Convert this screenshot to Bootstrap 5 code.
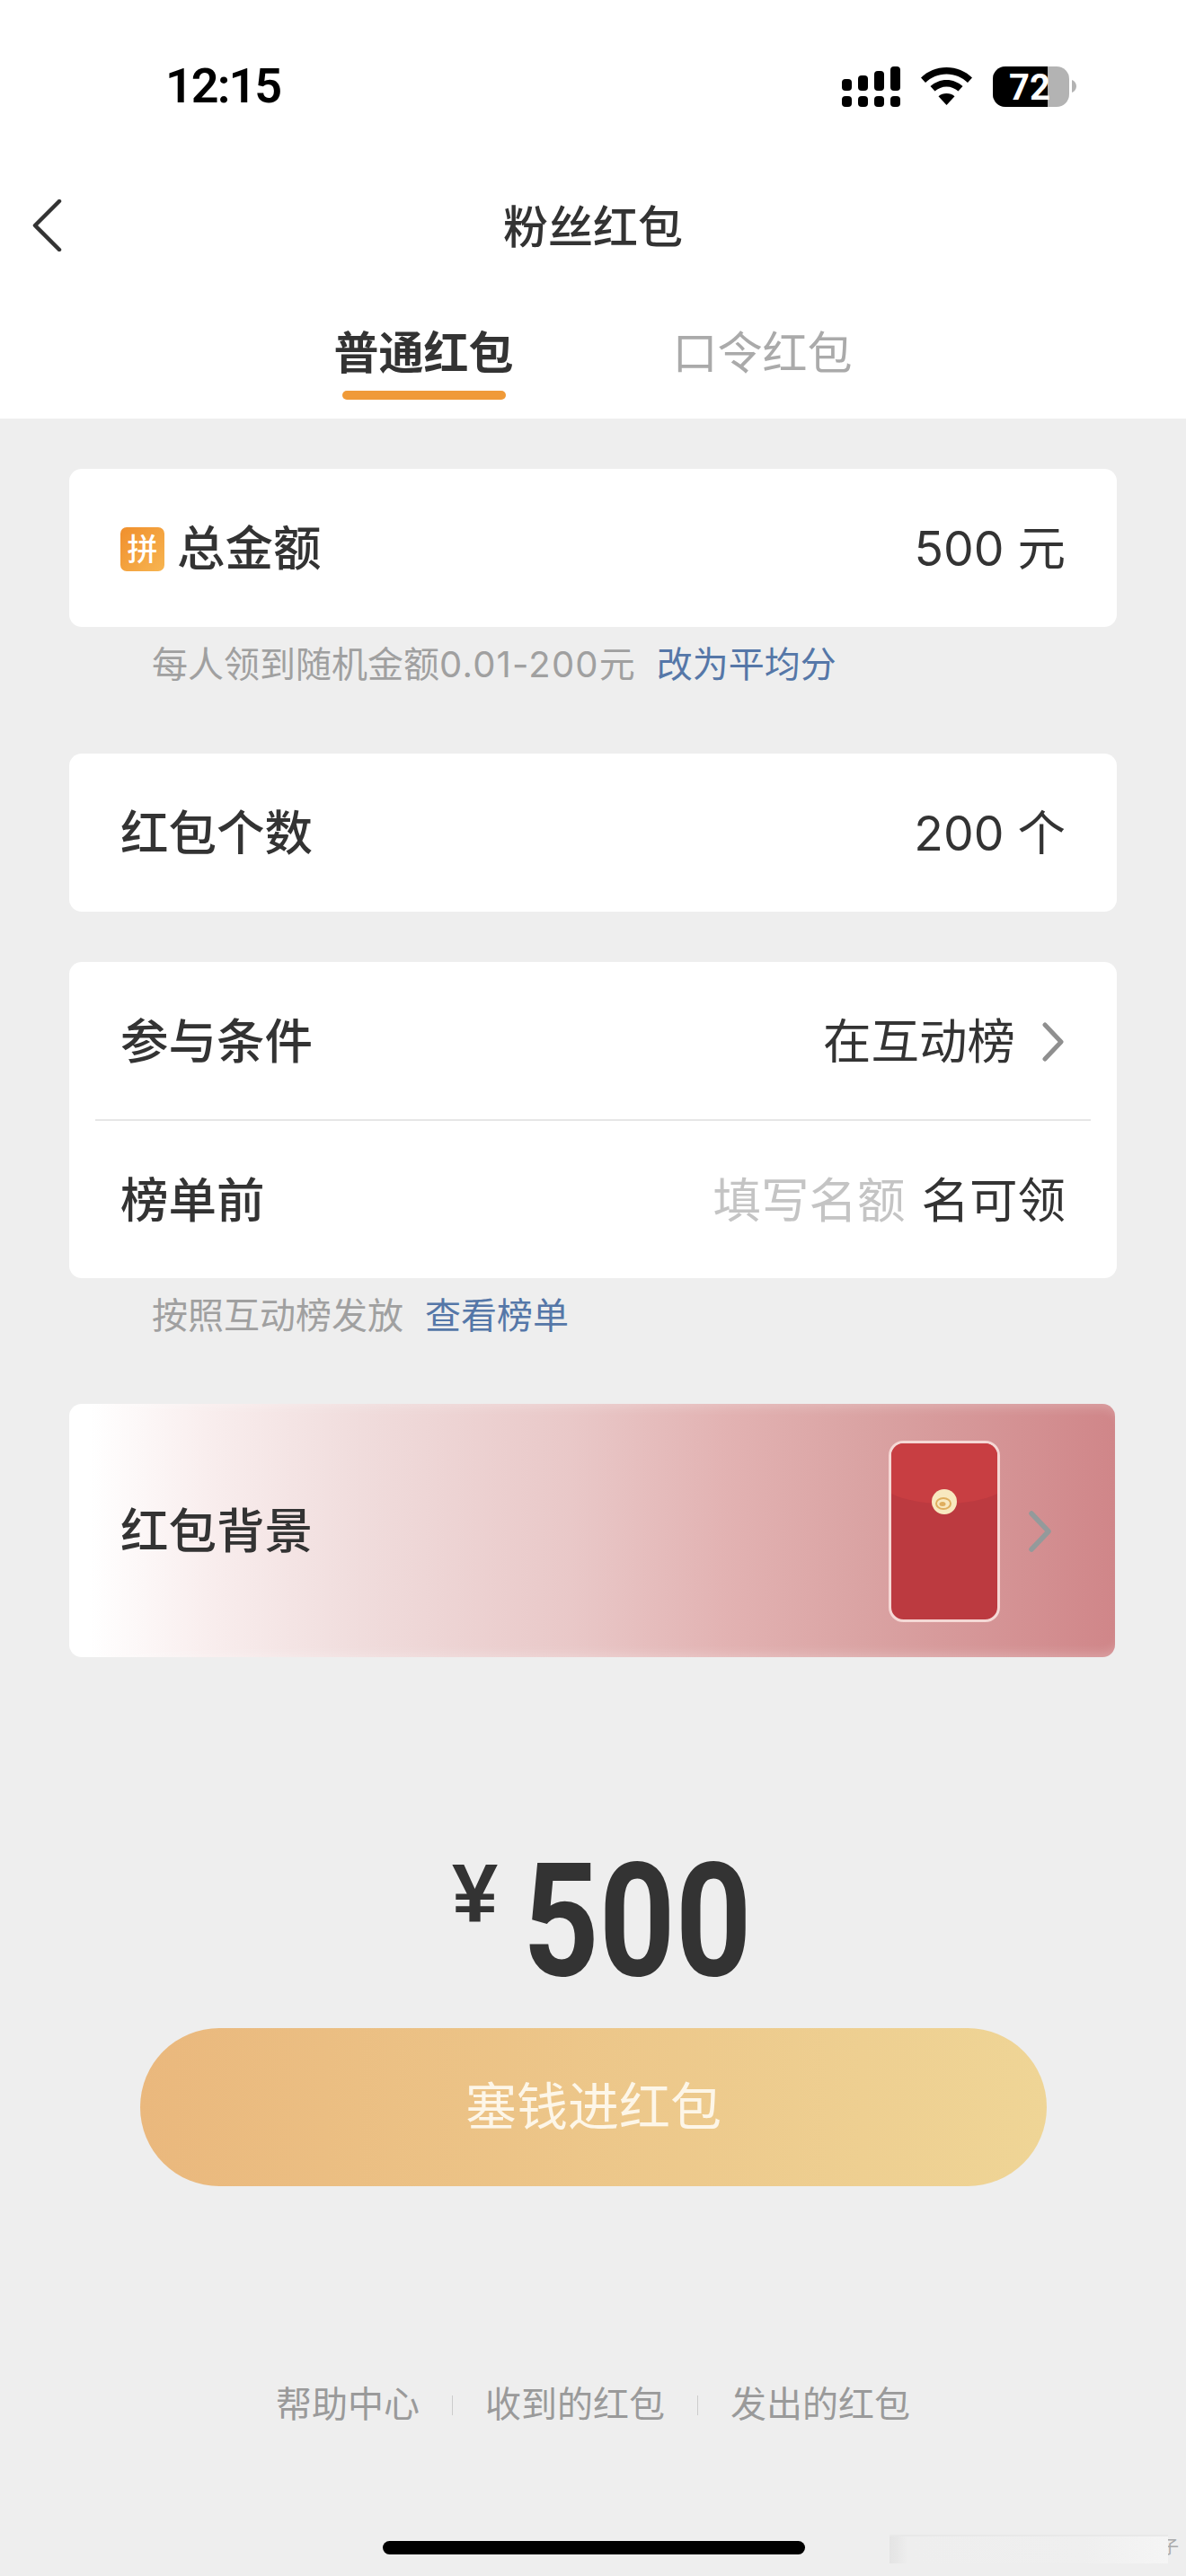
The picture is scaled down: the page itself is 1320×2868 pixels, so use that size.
<!DOCTYPE html>
<html lang="zh-CN">
<head>
  <meta charset="UTF-8" />
  <meta name="viewport" content="width=device-width, initial-scale=1.0" />
  <title>粉丝红包</title>
  <link href="https://cdn.jsdelivr.net/npm/bootstrap@5.3.3/dist/css/bootstrap.min.css" rel="stylesheet" />
  <style>
    body { background: #eee; color: #333; font-family: Inter, "Noto Sans CJK SC", sans-serif; }
    .page { width: 1320px; height: 2868px; overflow: hidden; }
    .top-area { height: 466px; background: #fff; }
    .status-row { height: 196px; padding: 0 122px 4px 184px; }
    .clock { font: 600 54px/1 Roboto, sans-serif; color: #000; letter-spacing: -2px; }
    .title-row { height: 112px; padding-top: 2px; }
    .back-btn { position: absolute; left: 34px; top: 26px; }
    .page-title { font-size: 50px; font-weight: 500; line-height: 1; }
    .tab-row { gap: 177px; padding-top: 60px; }
    .tab-item { font-size: 50px; line-height: 1; width: 200px; text-align: center; white-space: nowrap; }
    .tab-on { font-weight: 700; }
    .tab-off { color: #aaa; }
    .tab-bar { width: 182px; height: 10px; margin: 17px auto 0; background: #f09a38; border-radius: 5px; }
    .main-area { padding: 56px 77px 0; position: relative; }
    .panel { border: 0; border-radius: 14px; background: #fff; }
    .field-row { height: 176px; padding: 2px 57px 0 57px; font-size: 53.5px; line-height: 1; color: #333; }
    .field-label { font-weight: 500; }
    .pin-icon { width: 49px; height: 49px; border-radius: 7px; background: linear-gradient(135deg, #f08f2c, #f7b551); color: #fff; font-size: 34px; font-weight: 500; line-height: 49px; text-align: center; margin-right: 14px; }
    .hint-line { font-size: 40px; line-height: 1; color: #a0a0a0; padding: 22px 0 0 92px; height: 141px; }
    .hint-nums { letter-spacing: 1.2px; }
    .hint-link { color: #5577a8; margin-left: 24px; }
    .spaced { margin-top: 56px; }
    .split-line { height: 2px; background: #e6e6e6; margin: 0 29px; }
    .row-half { height: 175px; }
    .link-value { gap: 29px; }
    .ph-text { color: #c4c4c4; margin-right: 18px; }
    .bg-panel { height: 282px; margin: -1px 2px 0 0; padding: 2px 71px 0 57px; background: linear-gradient(90deg, #fff 0, #fff 2%, #f9eeee 13%, #f0dcdc 28%, #e9c8c8 48%, #e2b2b2 63%, #daa3a3 76%, #d08689 100%); box-shadow: inset 0 12px 12px -8px rgba(255,255,255,.22), inset 0 -12px 12px -8px rgba(255,255,255,.22); font-size: 53.5px; font-weight: 500; line-height: 1; }
    .pack-group { gap: 32px; }
    .sum-line { margin-top: 175px; height: 238px; padding-left: 426px; color: #333; }
    .sum-yen { font: 700 92px/1 "Liberation Sans", sans-serif; margin-top: -62px; width: 79px; }
    .sum-num { font: 700 176px/1 Roboto, sans-serif; transform: scaleX(.84); transform-origin: left center; width: 242px; }
    .pay-btn { display: block; width: 1009px; height: 176px; margin: 0 0 0 79px; border: 0; border-radius: 88px; background: linear-gradient(90deg, #eab87d, #efd596); color: #fdf6e8; font-size: 57px; font-weight: 400; }
    .foot-line { margin-top: 223px; font-size: 40px; line-height: 1; color: #9a9a9a; }
    .foot-sep { width: 1px; height: 22px; background: #ccc; margin: 10px 36px 0; }
    .home-bar { width: 470px; height: 15px; background: #000; border-radius: 8px; margin: 132px 0 0 349px; }
    .wm-char { position: absolute; left: 1292px; top: 2824px; font-size: 20px; line-height: 24px; color: #aaa; }
    .wm-patch { position: absolute; left: 990px; top: 2822px; width: 310px; height: 32px; background: linear-gradient(90deg, #e4e4e4 0, #e8e8e8 10px, #eeeeee 20px, #efefef 70%, #f5f5f5 100%); border-top: 2px solid #e8e8e8; }
  </style>
</head>
<body>
  <div class="page d-flex flex-column position-relative">
    <header class="top-area">
      <div class="status-row d-flex justify-content-between align-items-center">
        <div class="clock">12:15</div>
        <svg width="261" height="60" viewBox="937 66 261 60" aria-hidden="true">
          <g fill="#000">
            <rect x="937" y="88" width="11" height="13" rx="4"/><rect x="955" y="84" width="11" height="17" rx="4"/>
            <rect x="973" y="79" width="11" height="22" rx="4"/><rect x="991" y="74" width="11" height="27" rx="4"/>
            <rect x="937" y="107" width="11" height="12" rx="4"/><rect x="955" y="107" width="11" height="12" rx="4"/>
            <rect x="973" y="107" width="11" height="12" rx="4"/><rect x="991" y="107" width="11" height="12" rx="4"/>
            <path d="M1053.5 75c11 0 21 4.200 28.500 11.500l-5 5.500c-6-5.800-14.500-9.500-23.500-9.500s-17.500 3.700-23.500 9.500l-5-5.500c7.500-7.300 17.500-11.500 28.500-11.500z"/>
            <path d="M1053.500 89c7 0 13 2.700 18 7l-5 5.500c-3.500-3-8-5-13-5s-9.500 2-13 5l-5-5.500c5-4.300 11-7 18-7z"/>
            <path d="M1053.500 104c3.500 0 6.500 1.200 9 3.200l-9 9.800-9-9.800c2.500-2 5.500-3.200 9-3.200z"/>
          </g>
          <rect x="1105" y="74" width="85" height="45" rx="14" fill="#b3b3b3"/>
          <path d="M1119 74h47v45h-47a14 14 0 0 1-14-14v-17a14 14 0 0 1 14-14z" fill="#000"/>
          <path d="M1193 89c3 1 5 4 5 7s-2 6-5 7z" fill="#b3b3b3"/>
          <text x="1123" y="111" fill="#fff" font-family="Roboto, sans-serif" font-size="40" font-weight="700">72</text>
        </svg>
      </div>
      <div class="title-row position-relative d-flex justify-content-center align-items-center">
        <a href="#" class="back-btn" aria-label="back">
          <svg width="36" height="58" viewBox="0 0 36 58"><path d="M32 2 5 29l27 27" fill="none" stroke="#333" stroke-width="4.500" stroke-linecap="round" stroke-linejoin="round"/></svg>
        </a>
        <div class="page-title">粉丝红包</div>
      </div>
      <div class="tab-row d-flex justify-content-center">
        <div class="tab-item tab-on">普通红包<div class="tab-bar"></div></div>
        <div class="tab-item tab-off">口令红包</div>
      </div>
    </header>

    <main class="main-area">
      <div class="card panel">
        <div class="field-row d-flex justify-content-between align-items-center">
          <div class="d-flex align-items-center field-label"><span class="pin-icon">拼</span>总金额</div>
          <div>500 元</div>
        </div>
      </div>
      <div class="hint-line">每人领到随机金额<span class="hint-nums">0.01-200</span>元<a class="hint-link text-decoration-none" href="#">改为平均分</a></div>

      <div class="card panel">
        <div class="field-row d-flex justify-content-between align-items-center">
          <div class="field-label">红包个数</div>
          <div>200 个</div>
        </div>
      </div>

      <div class="card panel spaced">
        <div class="field-row d-flex justify-content-between align-items-center row-half">
          <div class="field-label">参与条件</div>
          <div class="d-flex align-items-center link-value">在互动榜
            <svg width="27" height="44" viewBox="0 0 27 44"><path d="M4 3l18 19L4 41" fill="none" stroke="#8f8f8f" stroke-width="5" stroke-linecap="round" stroke-linejoin="round"/></svg>
          </div>
        </div>
        <div class="split-line"></div>
        <div class="field-row d-flex justify-content-between align-items-center row-half">
          <div class="field-label">榜单前</div>
          <div><span class="ph-text">填写名额</span>名可领</div>
        </div>
      </div>
      <div class="hint-line">按照互动榜发放<a class="hint-link text-decoration-none" href="#">查看榜单</a></div>

      <div class="card panel bg-panel d-flex flex-row justify-content-between align-items-center">
        <div>红包背景</div>
        <div class="pack-group d-flex align-items-center">
          <svg width="124" height="202" viewBox="0 0 124 202">
            <rect x="1.500" y="1.500" width="121" height="199" rx="15" fill="#bc3a40" stroke="#f5d8d5" stroke-width="3"/>
            <path d="M3 59V17A14 14 0 0 1 17 3h90a14 14 0 0 1 14 14v42c-14 7-36 11-59 11S17 66 3 59z" fill="#c83e42"/>
            <circle cx="62" cy="68" r="14" fill="#f8e8bf"/>
            <ellipse cx="61" cy="70" rx="8" ry="6" fill="none" stroke="#dfae5e" stroke-width="2"/>
            <ellipse cx="60" cy="70.500" rx="3.500" ry="2.500" fill="#dfae5e"/>
          </svg>
          <svg width="25" height="46" viewBox="0 0 25 46"><path d="M3 3l19 20L3 43" fill="none" stroke="#939a9b" stroke-width="5.500" stroke-linecap="round" stroke-linejoin="round"/></svg>
        </div>
      </div>

      <div class="sum-line d-flex align-items-center">
        <span class="sum-yen">¥</span><span class="sum-num">500</span>
      </div>
      <button type="button" class="btn pay-btn">塞钱进红包</button>

      <div class="foot-line d-flex justify-content-center">
        <span>帮助中心</span><span class="foot-sep"></span><span>收到的红包</span><span class="foot-sep"></span><span>发出的红包</span>
      </div>
      <div class="home-bar"></div>
    </main>
    <div class="wm-char">子</div>
    <div class="wm-patch"></div>
  </div>
  <script src="https://cdn.jsdelivr.net/npm/bootstrap@5.3.3/dist/js/bootstrap.bundle.min.js"></script>
</body>
</html>
